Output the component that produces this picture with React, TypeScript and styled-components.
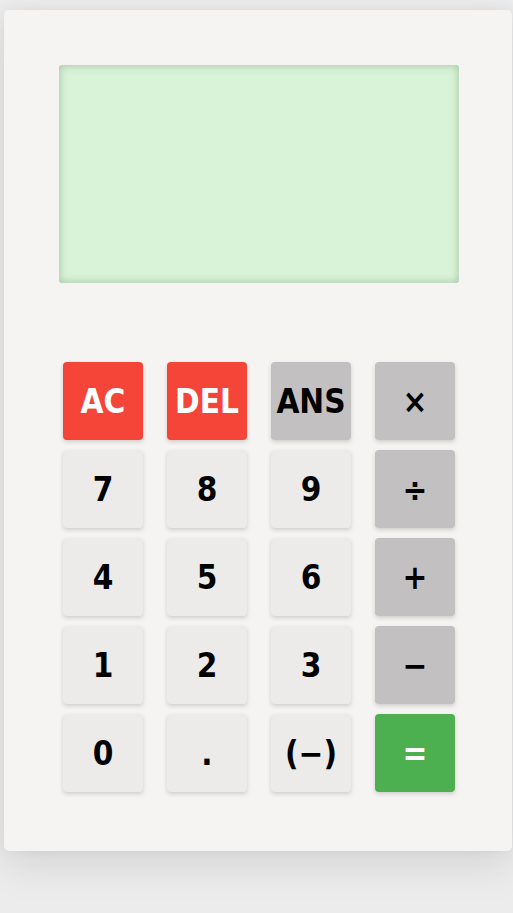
import React from "react";
import styled, { createGlobalStyle } from "styled-components";

const Global = createGlobalStyle`
  html, body {
    margin: 0;
    padding: 0;
    background: #ececec;
    height: 100%;
    overflow: hidden;
  }
  body {
    font-family: "DejaVu Sans", Verdana, sans-serif;
  }
`;

const Page = styled.div`
  padding: 10px 0 0 4px;
`;

const Card = styled.div`
  width: 508px;
  height: 841px;
  box-sizing: border-box;
  background: #f5f4f2;
  border-radius: 5px;
  box-shadow: 0 14px 40px rgba(0, 0, 0, 0.1), 0 0 12px rgba(0, 0, 0, 0.05);
  padding: 55px 0 0 55px;
  display: flex;
  flex-direction: column;
`;

const Display = styled.div`
  width: 400px;
  height: 218px;
  background: #d8f3d8;
  border-radius: 3px;
  box-shadow: inset 0 0 9px rgba(60, 100, 60, 0.35);
`;

const Keys = styled.div`
  margin-top: 79px;
  padding: 0 4px;
  display: grid;
  grid-template-columns: repeat(4, 80px);
  grid-auto-rows: 78px;
  column-gap: 24px;
  row-gap: 10px;
`;

type Kind = "danger" | "op" | "num" | "eq";

const bg: Record<Kind, string> = {
  danger: "#f54438",
  op: "#c2c0c0",
  num: "#ecebe9",
  eq: "#4caf50",
};

const Key = styled.button<{ $kind: Kind }>`
  border: none;
  margin: 0;
  padding: 0;
  border-radius: 4px;
  background: ${(p) => bg[p.$kind]};
  color: ${(p) => (p.$kind === "danger" || p.$kind === "eq" ? "#ffffff" : "#000000")};
  font-family: "DejaVu Sans Condensed", "DejaVu Sans", Verdana, sans-serif;
  font-stretch: condensed;
  font-weight: bold;
  font-size: 33px;
  line-height: 1;
  display: flex;
  align-items: center;
  justify-content: center;
  white-space: nowrap;
  overflow: visible;
  box-shadow: 0 2px 4px rgba(0, 0, 0, 0.16);
  cursor: pointer;
`;

const keys: { label: string; kind: Kind }[] = [
  { label: "AC", kind: "danger" },
  { label: "DEL", kind: "danger" },
  { label: "ANS", kind: "op" },
  { label: "×", kind: "op" },
  { label: "7", kind: "num" },
  { label: "8", kind: "num" },
  { label: "9", kind: "num" },
  { label: "÷", kind: "op" },
  { label: "4", kind: "num" },
  { label: "5", kind: "num" },
  { label: "6", kind: "num" },
  { label: "+", kind: "op" },
  { label: "1", kind: "num" },
  { label: "2", kind: "num" },
  { label: "3", kind: "num" },
  { label: "−", kind: "op" },
  { label: "0", kind: "num" },
  { label: ".", kind: "num" },
  { label: "(−)", kind: "num" },
  { label: "=", kind: "eq" },
];

export default function App() {
  return (
    <>
      <Global />
      <Page>
        <Card>
          <Display />
          <Keys>
            {keys.map((k) => (
              <Key key={k.label} $kind={k.kind}>
                {k.label}
              </Key>
            ))}
          </Keys>
        </Card>
      </Page>
    </>
  );
}
